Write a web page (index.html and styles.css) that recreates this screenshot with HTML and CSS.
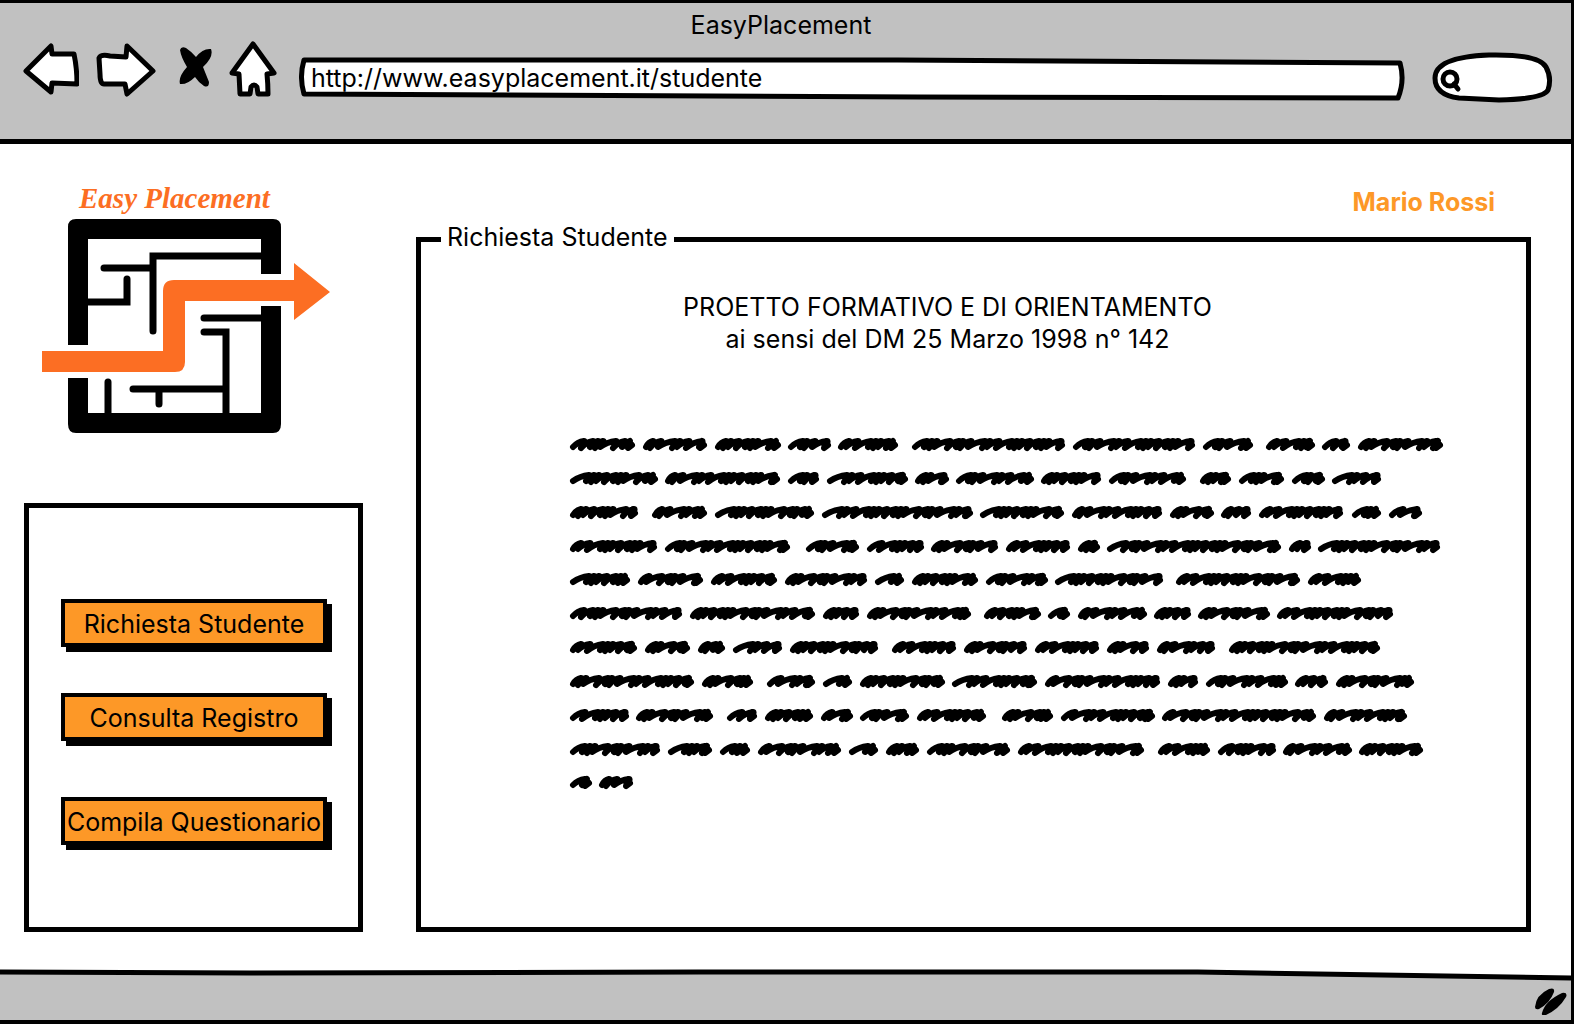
FILE: index.html
```html
<!DOCTYPE html>
<html lang="it">
<head>
<meta charset="utf-8">
<meta name="viewport" content="width=device-width, initial-scale=1">
<title>EasyPlacement</title>
<link rel="stylesheet" href="styles.css">
</head>
<body>
<div class="window">
  <header class="chrome">
    <div class="chrome__title">EasyPlacement</div>
    <div class="toolbar">
      <button class="tool" type="button" aria-label="Indietro">
        <svg width="56" height="56" viewBox="23 41 56 56"><path class="ink ink--bold" d="M26 71 51 46 52 54 74 54 Q77 68 77 84L52 83 51 92Z"/></svg>
      </button>
      <button class="tool" type="button" aria-label="Avanti">
        <svg width="62" height="56" viewBox="95 41 62 56"><path class="ink ink--bold" d="M99 58 Q101 54 110 56L126 57 127 46 153 71 127 94 125 84 104 84 Q100 84 100 74Z"/></svg>
      </button>
      <button class="tool" type="button" aria-label="Interrompi">
        <svg width="40" height="56" viewBox="173 41 40 56"><path d="M180 50Q181 46 186 48 192 52 196 57 203 48 211 49 214 57 203 67L209 82Q209 88 204 86 199 83 195 77 187 85 180 84 178 77 187 67 181 57 180 50Z"/></svg>
      </button>
      <button class="tool" type="button" aria-label="Home">
        <svg width="48" height="56" viewBox="228 41 48 56"><path class="ink ink--bold" d="M252 44 273 73 266 74Q267 84 267 94L257 94 256 87Q253 83 250 87L249 94 239 94 238 74 231 73Z"/></svg>
      </button>
      <div class="field field--url">
        <svg class="field__frame" viewBox="0 0 1108 46" preserveAspectRatio="none" aria-hidden="true"><path class="ink ink--fixed" d="M5 3 600 3 1103 6Q1108 24 1101 41L620 40 5 37Q0 20 5 3Z"/></svg>
        <input class="field__input" type="text" aria-label="Indirizzo" value="http://www.easyplacement.it/studente">
      </div>
      <div class="field field--search">
        <svg class="field__frame" viewBox="1432 51 122 52" aria-hidden="true"><path class="ink ink--bold" d="M1436 78Q1436 57 1490 55 1540 54 1547 67 1553 78 1549 90 1544 99 1500 100L1460 98Q1436 95 1436 78Z"/><circle class="ink ink--bold" cx="1451" cy="79" r="7"/><path class="ink ink--bold" d="M1455 84 1459 89"/></svg>
        <input class="field__input" type="search" aria-label="Cerca">
      </div>
    </div>
  </header>

  <main class="page">
    <aside class="side">
      <svg class="logo" width="296" height="256" viewBox="38 180 296 256" role="img" aria-label="Easy Placement">
        <text class="logo__name" x="79" y="208">Easy Placement</text>
        <path d="M68 345V227Q68 219 76 219H273Q281 219 281 227V274H261V239H88V345ZM68 378H88V413H261V306H281V424Q281 433 273 433H76Q68 433 68 424Z"/>
        <path class="logo__wall" d="M261 256H153V331M104 268H153M88 302H127V279M204 318H261M204 332H226V413M133 389H226M159 389V404M108 382V413"/>
        <path class="logo__arrow" d="M42 351H163V291Q163 280 174 280H294V263L330 292 294 320V301H185V362Q185 372 175 372H42Z"/>
      </svg>
      <nav class="menu">
        <button class="menu__item" type="button">Richiesta Studente</button>
        <button class="menu__item" type="button">Consulta Registro</button>
        <button class="menu__item" type="button">Compila Questionario</button>
      </nav>
    </aside>

    <section class="content">
      <div class="user">Mario Rossi</div>
      <fieldset class="panel">
        <legend class="panel__legend">Richiesta Studente</legend>
        <div class="panel__heading">
          PROETTO FORMATIVO E DI ORIENTAMENTO<br>
          ai sensi del DM 25 Marzo 1998 n° 142
        </div>
        <svg class="scribble" width="878" height="356" viewBox="568 436 878 356" aria-hidden="true"><path class="scribble__line"/></svg>
      </fieldset>
    </section>
  </main>

  <footer class="status">
    <svg class="status__edge" viewBox="0 0 1574 12" preserveAspectRatio="none" aria-hidden="true"><path class="status__fill" d="M0 3 700 4 1200 4 1574 8V12H0Z"/><path class="ink ink--open" d="M0 3 250 4 700 3 1200 3 1574 9"/></svg>
    <svg class="status__grip" width="34" height="28" viewBox="1534 986 34 28" aria-hidden="true"><path d="M1535 1006Q1536 994 1549 988 1555 986 1554 991 1550 1002 1539 1008 1535 1009 1535 1006ZM1542 1012Q1545 1000 1562 992 1568 991 1566 996 1559 1008 1546 1014 1541 1015 1542 1012Z"/></svg>
  </footer>
</div>
<script src="scribble.js"></script>
</body>
</html>
```
FILE: styles.css
```css
* { box-sizing: border-box; }

body {
  margin: 0;
  background: #fff;
  color: #000;
  font-family: Inter, sans-serif;
  font-size: 25px;
  line-height: 32px;
}

button, input { font: inherit; color: inherit; }

.window {
  display: flex;
  flex-direction: column;
  min-height: 100vh;
  border: solid #000;
  border-width: 3px 3px 4px 0;
}

.ink {
  fill: #fff;
  stroke: #000;
  stroke-width: 4px;
  stroke-linejoin: round;
  stroke-linecap: round;
}
.ink--bold { stroke-width: 5px; }
.ink--fixed { stroke-width: 5px; vector-effect: non-scaling-stroke; }
.ink--open { fill: none; stroke-width: 5px; vector-effect: non-scaling-stroke; }

/* Browser bar */
.chrome {
  background: #c1c1c1;
  border-bottom: 5px solid #000;
  padding: 6px 18px 36px 23px;
}
.chrome__title { padding-right: 14px; text-align: center; }
.toolbar { display: flex; align-items: flex-start; gap: 16px; }
.tool { display: block; padding: 0; border: 0; background: none; cursor: pointer; }
.tool svg { display: block; }

.field { position: relative; height: 46px; margin-top: 16px; }
.field--url { flex: 1; margin-left: 6px; }
.field--search { flex: none; width: 122px; height: 52px; margin: 10px 0 0 10px; }
.field__frame { position: absolute; inset: 0; width: 100%; height: 100%; }
.field__input {
  position: relative;
  display: block;
  width: 100%;
  height: 42px;
  padding: 0 12px;
  border: 0;
  background: none;
  outline: none;
  appearance: none;
}
.field--search .field__input { padding-left: 32px; }

/* Page body */
.page {
  flex: 1;
  display: grid;
  grid-template-columns: 339px 1fr;
  gap: 53px;
  padding: 36px 40px 37px 24px;
}
.side, .content { display: flex; flex-direction: column; }

.logo { display: block; margin: 0 0 67px 14px; }
.logo__name {
  font: italic bold 29px "Liberation Serif", serif;
  fill: #fc6e23;
}
.logo__wall { fill: none; stroke: #000; stroke-width: 7px; stroke-linecap: round; }
.logo__arrow { fill: #fc6e23; }

.menu {
  flex: 1;
  display: flex;
  flex-direction: column;
  gap: 46px;
  padding: 91px 31px 0 32px;
  border: 5px solid #000;
}
.menu__item {
  height: 48px;
  padding: 2px 0 0;
  border: 4px solid #000;
  background: #fd9827;
  box-shadow: 5px 5px 0 #000;
  white-space: nowrap;
  cursor: pointer;
}
.menu__item:last-child { margin-top: 10px; }

.user {
  padding: 6px 36px 3px 0;
  color: #fd9827;
  font-weight: bold;
  text-align: right;
}

.panel {
  flex: 1;
  min-width: 0;
  margin: 0;
  padding: 34px 0 0;
  border: 5px solid #000;
}
.panel__legend { margin-left: 20px; padding: 0 6px 4px; }
.panel__heading { padding-right: 52px; text-align: center; }
.scribble { display: block; max-width: 100%; margin: 81px 0 0 147px; }
.scribble__line {
  fill: none;
  stroke: #000;
  stroke-width: 6px;
  stroke-linecap: round;
  stroke-linejoin: round;
}

/* Bottom bar */
.status {
  display: flex;
  flex-direction: column;
  background: #c1c1c1;
}
.status__edge { display: block; width: 100%; height: 12px; background: #fff; }
.status__fill { fill: #c1c1c1; }
.status__grip { align-self: flex-end; margin: 6px 3px 5px 0; }
```
FILE: scribble.js
```js
// Greeked body copy: each row is a baseline followed by the start and end of every word.
const rows = [
  [445, [570,635, 643,707, 715,781, 788,831, 838,898, 912,1065, 1073,1195, 1203,1253, 1266,1315, 1322,1350, 1358,1443]],
  [479, [570,658, 665,780, 788,819, 827,908, 915,949, 956,1034, 1041,1101, 1109,1186, 1200,1231, 1239,1284, 1292,1325, 1332,1381]],
  [513, [570,638, 652,707, 715,814, 822,973, 980,1064, 1072,1162, 1170,1214, 1221,1251, 1259,1343, 1352,1381, 1389,1422]],
  [547, [570,657, 665,790, 806,859, 867,924, 931,998, 1006,1070, 1078,1100, 1107,1281, 1289,1311, 1318,1440]],
  [580, [570,630, 638,703, 711,777, 785,867, 875,904, 912,978, 986,1048, 1055,1163, 1176,1300, 1308,1361]],
  [614, [570,682, 690,815, 823,859, 867,971, 984,1041, 1048,1070, 1078,1147, 1154,1191, 1198,1270, 1277,1393]],
  [648, [570,637, 645,690, 698,725, 733,782, 790,878, 892,956, 964,1027, 1035,1099, 1107,1149, 1157,1215, 1229,1380]],
  [682, [570,694, 702,753, 767,815, 823,852, 860,945, 952,1037, 1045,1160, 1168,1198, 1206,1288, 1295,1328, 1336,1414]],
  [716, [570,629, 636,713, 727,757, 765,813, 821,853, 860,909, 917,986, 1002,1053, 1061,1155, 1162,1316, 1324,1407]],
  [750, [570,660, 668,712, 720,750, 758,841, 849,878, 886,919, 927,1010, 1018,1144, 1158,1210, 1218,1276, 1283,1352, 1359,1423]],
  [783, [570,592, 599,633]]
];

// Pen advances, cycled through so that words mix tight and open strokes.
const steps = [9, 10, 6, 6, 14, 10, 5, 9, 15, 6, 10, 14, 6, 6];

let path = "";
let n = 0;
for (const [y, words] of rows) {
  for (let i = 0; i < words.length; i += 2) {
    let x = words[i] + 3;
    const end = words[i + 1] - 3;
    path += `M${x} ${y + 2}`;
    while (x + 10 < end) {
      const step = Math.min(steps[n++ % steps.length], end - x - 3);
      const low = y + 2 + (n % 2);
      const top = Math.min(x + step + 3, end);
      path += `Q${x + step / 2} ${y - 3} ${top - 1} ${y - 4}Q${top + 1} ${y - 4} ${x + step - 1} ${low}`;
      x += step - 1;
    }
    path += `L${end - 2} ${y - 4}L${end - 4} ${y + 3}L${end} ${y}`;
  }
}
document.querySelector(".scribble__line").setAttribute("d", path);
```
